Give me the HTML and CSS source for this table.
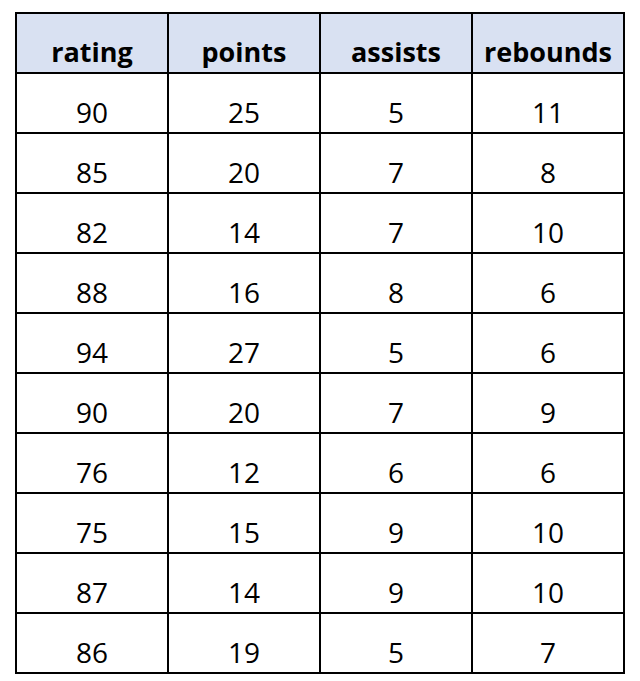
FILE: index.html
```html
<!DOCTYPE html>
<html>
<head>
<meta charset="utf-8">
<link rel="stylesheet" href="styles.css">
</head>
<body>
<table class="stats">
  <thead>
    <tr><th>rating</th><th>points</th><th>assists</th><th>rebounds</th></tr>
  </thead>
  <tbody>
    <tr><td>90</td><td>25</td><td>5</td><td>11</td></tr>
    <tr><td>85</td><td>20</td><td>7</td><td>8</td></tr>
    <tr><td>82</td><td>14</td><td>7</td><td>10</td></tr>
    <tr><td>88</td><td>16</td><td>8</td><td>6</td></tr>
    <tr><td>94</td><td>27</td><td>5</td><td>6</td></tr>
    <tr><td>90</td><td>20</td><td>7</td><td>9</td></tr>
    <tr><td>76</td><td>12</td><td>6</td><td>6</td></tr>
    <tr><td>75</td><td>15</td><td>9</td><td>10</td></tr>
    <tr><td>87</td><td>14</td><td>9</td><td>10</td></tr>
    <tr><td>86</td><td>19</td><td>5</td><td>7</td></tr>
  </tbody>
</table>
</body>
</html>
```
FILE: styles.css
```css
html, body {
  margin: 0;
  padding: 0;
  background: #ffffff;
}
body {
  padding: 12px 0 0 15px;
  font-family: "Open Sans", "Liberation Sans", sans-serif;
  color: #000000;
}
.stats {
  border-collapse: separate;
  border-spacing: 0;
  border-left: 2px solid #000;
  border-top: 2px solid #000;
  table-layout: fixed;
}
.stats th,
.stats td {
  box-sizing: border-box;
  width: 152px;
  height: 60px;
  border-right: 2px solid #000;
  border-bottom: 2px solid #000;
  text-align: center;
  vertical-align: bottom;
  padding: 0 0 6px 0;
  line-height: 28px;
}
.stats th {
  background: #d9e1f2;
  font-weight: 700;
  font-size: 27px;
}
.stats td {
  font-weight: 400;
  font-size: 28px;
}
```
